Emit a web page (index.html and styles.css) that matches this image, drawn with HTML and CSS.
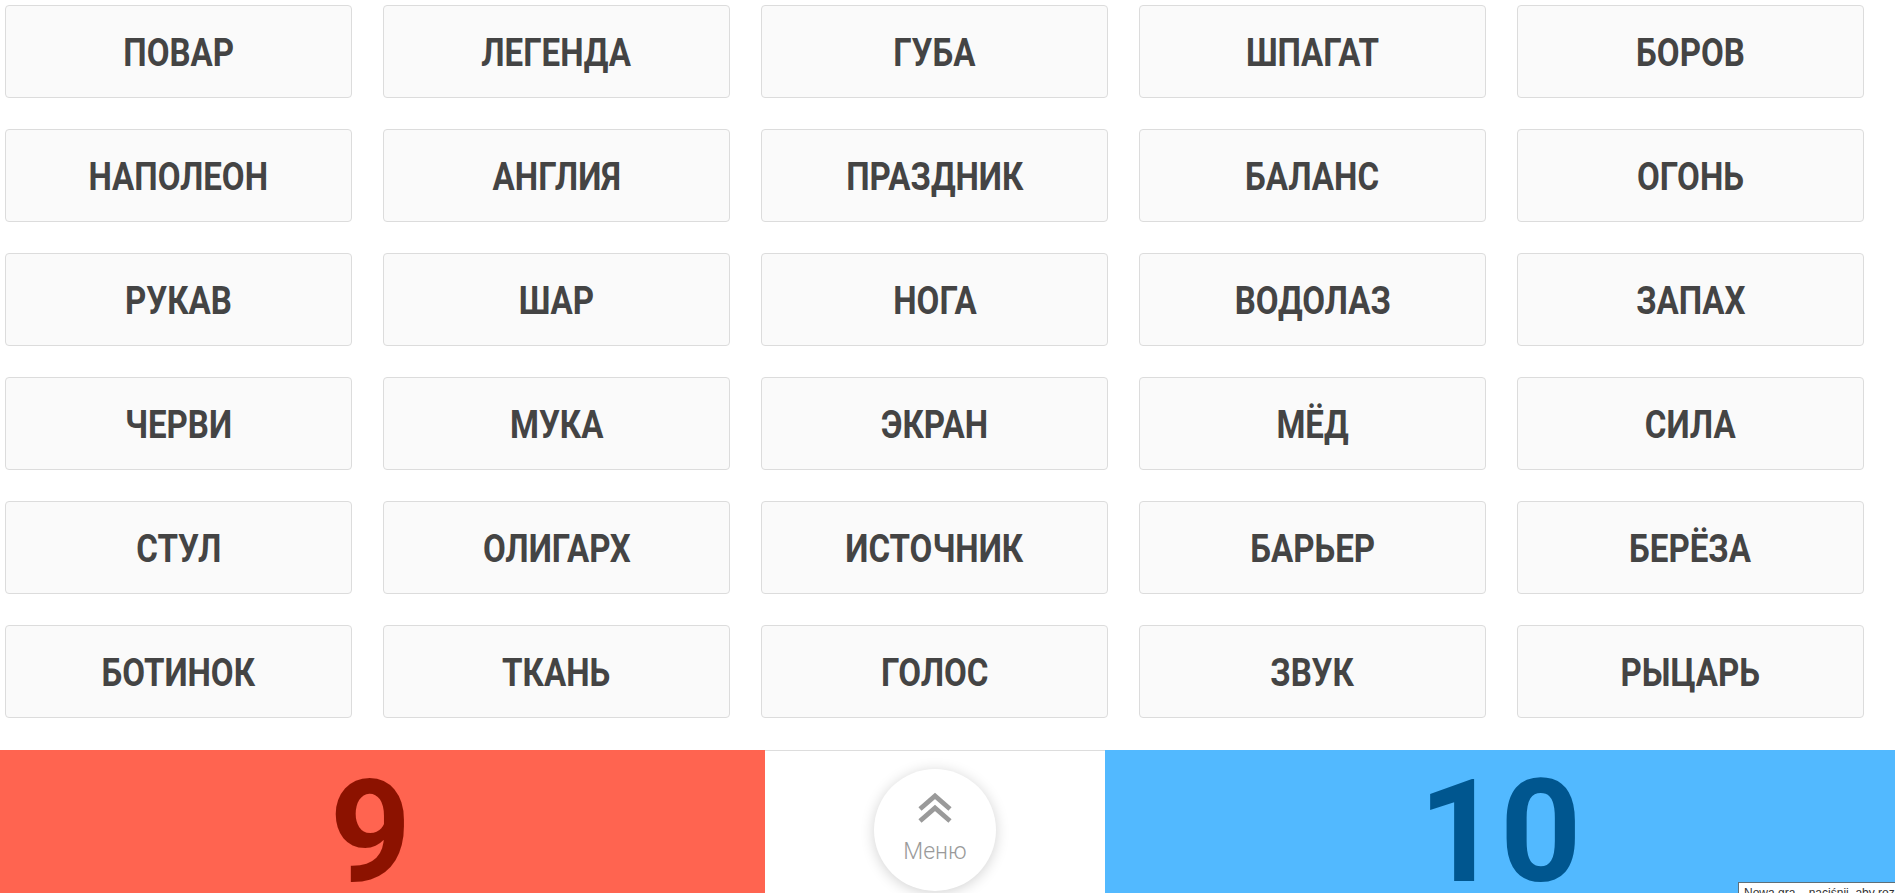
FILE: index.html
```html
<!DOCTYPE html>
<html lang="ru">
<head>
<meta charset="utf-8">
<title>Игра</title>
<link rel="stylesheet" href="styles.css">
</head>
<body>
<div class="board">
  <div class="card"><span class="word">ПОВАР</span></div>
  <div class="card"><span class="word">ЛЕГЕНДА</span></div>
  <div class="card"><span class="word">ГУБА</span></div>
  <div class="card"><span class="word">ШПАГАТ</span></div>
  <div class="card"><span class="word">БОРОВ</span></div>
  <div class="card"><span class="word">НАПОЛЕОН</span></div>
  <div class="card"><span class="word">АНГЛИЯ</span></div>
  <div class="card"><span class="word">ПРАЗДНИК</span></div>
  <div class="card"><span class="word">БАЛАНС</span></div>
  <div class="card"><span class="word">ОГОНЬ</span></div>
  <div class="card"><span class="word">РУКАВ</span></div>
  <div class="card"><span class="word">ШАР</span></div>
  <div class="card"><span class="word">НОГА</span></div>
  <div class="card"><span class="word">ВОДОЛАЗ</span></div>
  <div class="card"><span class="word">ЗАПАХ</span></div>
  <div class="card"><span class="word">ЧЕРВИ</span></div>
  <div class="card"><span class="word">МУКА</span></div>
  <div class="card"><span class="word">ЭКРАН</span></div>
  <div class="card"><span class="word">МЁД</span></div>
  <div class="card"><span class="word">СИЛА</span></div>
  <div class="card"><span class="word">СТУЛ</span></div>
  <div class="card"><span class="word">ОЛИГАРХ</span></div>
  <div class="card"><span class="word">ИСТОЧНИК</span></div>
  <div class="card"><span class="word">БАРЬЕР</span></div>
  <div class="card"><span class="word">БЕРЁЗА</span></div>
  <div class="card"><span class="word">БОТИНОК</span></div>
  <div class="card"><span class="word">ТКАНЬ</span></div>
  <div class="card"><span class="word">ГОЛОС</span></div>
  <div class="card"><span class="word">ЗВУК</span></div>
  <div class="card"><span class="word">РЫЦАРЬ</span></div>
</div>
<div class="scorebar">
  <div class="team team-red"><span class="score">9</span></div>
  <div class="middle">
    <button class="menu-btn">
      <svg class="chev" width="36" height="32" viewBox="0 0 36 32">
        <path d="M3 17 L18 4 L33 17" fill="none" stroke="#9a9a9a" stroke-width="4.8"/>
        <path d="M3 29 L18 16 L33 29" fill="none" stroke="#9a9a9a" stroke-width="4.8"/>
      </svg>
      <span class="menu-label">Меню</span>
    </button>
  </div>
  <div class="team team-blue"><span class="score">10</span></div>
</div>
<div class="tooltip">Nowa gra – naciśnij, aby rozpocząć</div>
</body>
</html>
```

FILE: styles.css
```css
html, body {
  margin: 0;
  padding: 0;
  background: #ffffff;
  overflow: hidden;
  height: 893px;
}
body {
  font-family: Roboto, "Liberation Sans", sans-serif;
  position: relative;
}
.board {
  display: grid;
  grid-template-columns: repeat(5, 347px);
  grid-auto-rows: 93px;
  column-gap: 31px;
  row-gap: 31px;
  padding: 5px 0 0 5px;
}
.card {
  box-sizing: border-box;
  background: #fafafa;
  border: 1px solid #dcdcdc;
  border-radius: 4px;
  display: flex;
  align-items: center;
  justify-content: center;
  padding-top: 2px;
}
.word {
  font-family: Roboto, "Liberation Sans", sans-serif;
  font-weight: 700;
  font-size: 38px;
  line-height: 1;
  color: #444444;
  display: inline-block;
  transform: scaleX(0.87);
  white-space: nowrap;
}
.scorebar {
  margin-top: 32px;
  display: flex;
  height: 160px;
}
.team {
  display: flex;
  justify-content: center;
  align-items: flex-start;
}
.team-red {
  width: 765px;
  background: #ff6450;
  color: #8c1200;
}
.team-blue {
  flex: 1;
  background: #52b9ff;
  color: #00568f;
}
.score {
  font-family: Roboto, "Liberation Sans", sans-serif;
  font-weight: 700;
  font-size: 142px;
  line-height: 1;
  margin-top: 12px;
}
.team-red .score {
  margin-right: 24px;
}
.middle {
  width: 340px;
  box-sizing: border-box;
  border-top: 1px solid #dddddd;
  display: flex;
  justify-content: center;
  align-items: flex-start;
}
.menu-btn {
  margin-top: 18px;
  width: 122px;
  height: 122px;
  border-radius: 50%;
  border: none;
  background: #ffffff;
  box-shadow: 0 2px 14px rgba(0, 0, 0, 0.18);
  display: flex;
  flex-direction: column;
  align-items: center;
  padding: 23px 0 0 0;
  box-sizing: border-box;
}
.chev {
  display: block;
  flex: none;
}
.menu-label {
  font-family: Roboto, "Liberation Sans", sans-serif;
  font-weight: 300;
  font-size: 23px;
  line-height: 1;
  color: #9a9a9a;
  margin-top: 16px;
}
.tooltip {
  position: absolute;
  left: 1738px;
  top: 882px;
  width: 170px;
  height: 24px;
  box-sizing: border-box;
  border: 1px solid #5f6f78;
  background: #ffffff;
  font-family: "Liberation Sans", sans-serif;
  font-size: 12px;
  color: #333;
  padding: 3px 5px;
  white-space: nowrap;
}
```
